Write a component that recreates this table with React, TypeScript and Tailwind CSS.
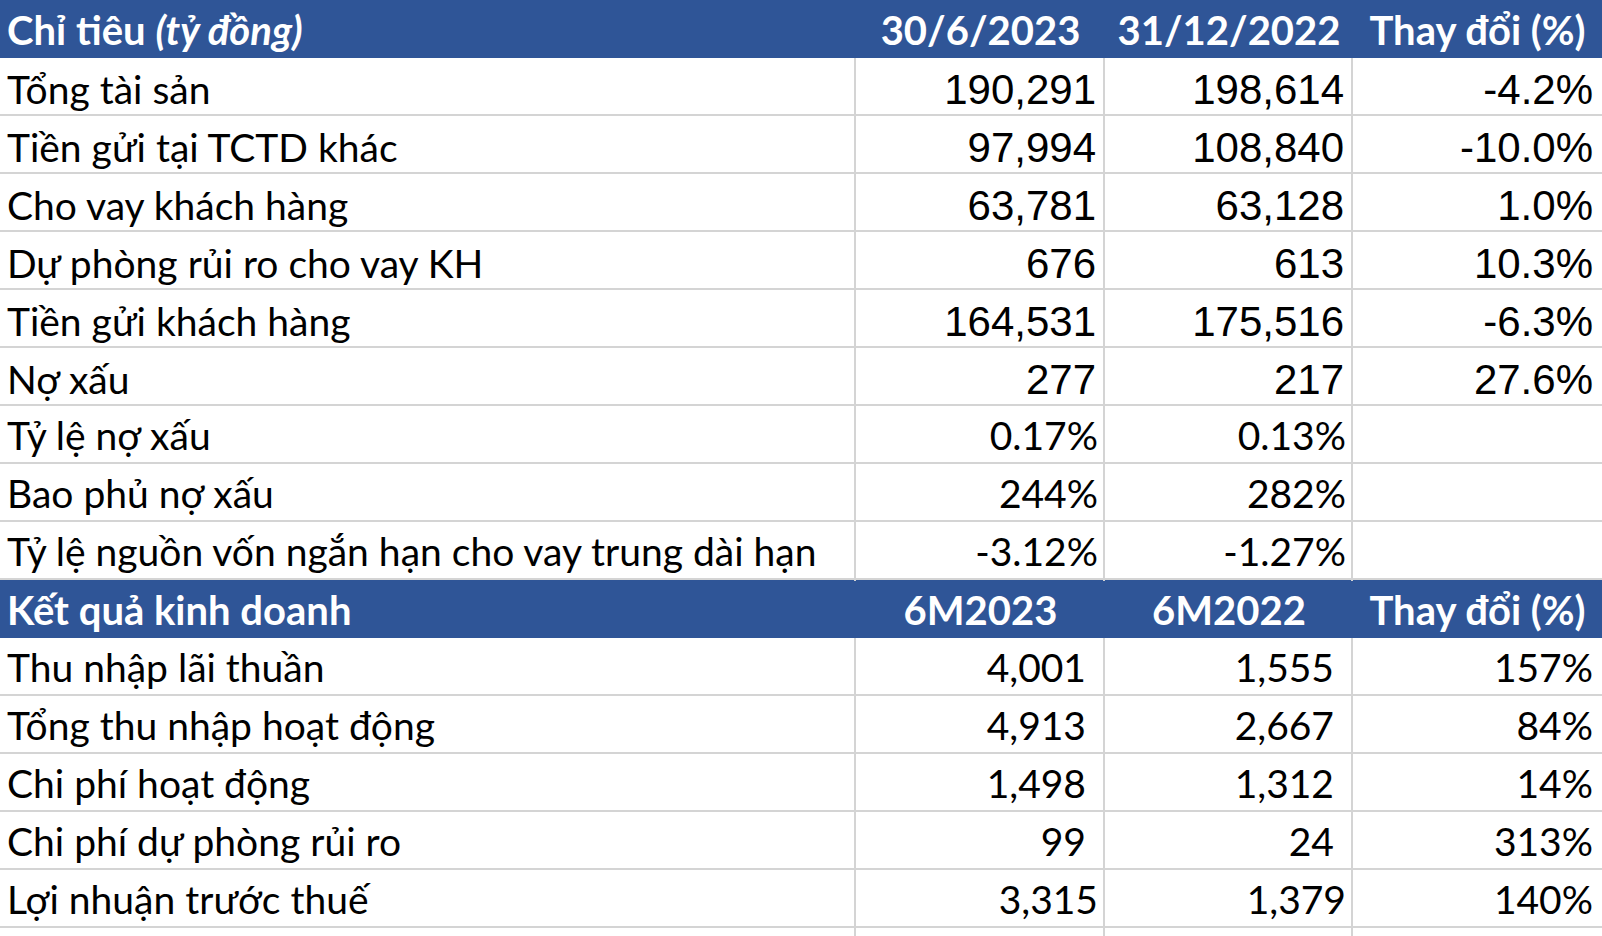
import React from 'react'

type Cell = { v: string; f?: 'a' | 'c'; pr?: string }
type Row = { label: string; cells: Cell[] }

const calibri = "font-['Lato','Noto_Sans',sans-serif] text-[39px]"
const calibriHead = "font-['Lato','Noto_Sans',sans-serif] text-[40px]"
const arial = "font-['Liberation_Sans',Arial,sans-serif] text-[42px]"

const a = (v: string, pr = 'pr-[7px]'): Cell => ({ v, f: 'a', pr })
const c = (v: string, pr = 'pr-[5px]'): Cell => ({ v, f: 'c', pr })

const balance: Row[] = [
  { label: 'Tổng tài sản', cells: [a('190,291'), a('198,614'), a('-4.2%', 'pr-[9px]')] },
  { label: 'Tiền gửi tại TCTD khác', cells: [a('97,994'), a('108,840'), a('-10.0%', 'pr-[9px]')] },
  { label: 'Cho vay khách hàng', cells: [a('63,781'), a('63,128'), a('1.0%', 'pr-[9px]')] },
  { label: 'Dự phòng rủi ro cho vay KH', cells: [a('676'), a('613'), a('10.3%', 'pr-[9px]')] },
  { label: 'Tiền gửi khách hàng', cells: [a('164,531'), a('175,516'), a('-6.3%', 'pr-[9px]')] },
  { label: 'Nợ xấu', cells: [a('277'), a('217'), a('27.6%', 'pr-[9px]')] },
  { label: 'Tỷ lệ nợ xấu', cells: [c('0.17%'), c('0.13%'), c('')] },
  { label: 'Bao phủ nợ xấu', cells: [c('244%'), c('282%'), c('')] },
  { label: 'Tỷ lệ nguồn vốn ngắn hạn cho vay trung dài hạn', cells: [c('-3.12%'), c('-1.27%'), c('')] },
]

const income: Row[] = [
  { label: 'Thu nhập lãi thuần', cells: [c('4,001', 'pr-[17px]'), c('1,555', 'pr-[17px]'), c('157%', 'pr-[9px]')] },
  { label: 'Tổng thu nhập hoạt động', cells: [c('4,913', 'pr-[17px]'), c('2,667', 'pr-[17px]'), c('84%', 'pr-[9px]')] },
  { label: 'Chi phí hoạt động', cells: [c('1,498', 'pr-[17px]'), c('1,312', 'pr-[17px]'), c('14%', 'pr-[9px]')] },
  { label: 'Chi phí dự phòng rủi ro', cells: [c('99', 'pr-[17px]'), c('24', 'pr-[17px]'), c('313%', 'pr-[9px]')] },
  { label: 'Lợi nhuận trước thuế', cells: [c('3,315'), c('1,379'), c('140%', 'pr-[9px]')] },
]

function HeaderRow({ title, cols }: { title: React.ReactNode; cols: string[] }) {
  return (
    <div className={`grid grid-cols-[856px_249px_248px_249px] h-[58px] bg-[#2f5597] text-white font-bold ${calibriHead}`}>
      <div className="flex items-center pl-[7px] whitespace-nowrap">{title}</div>
      {cols.map((t) => (
        <div key={t} className="flex items-center justify-center whitespace-nowrap">{t}</div>
      ))}
    </div>
  )
}

function BodyRow({ row }: { row: Row }) {
  return (
    <div className="grid grid-cols-[856px_249px_248px_249px] h-[58px] border-b-2 border-[#d4d4d4] text-black">
      <div className={`flex items-center pl-[7px] whitespace-nowrap border-r-2 border-[#d4d4d4] ${calibri}`}>{row.label}</div>
      {row.cells.map((cell, i) => (
        <div
          key={i}
          className={`flex items-center justify-end whitespace-nowrap ${cell.pr} ${i < 2 ? 'border-r-2 border-[#d4d4d4]' : ''} ${cell.f === 'a' ? arial : calibri}`}
        >
          {cell.v}
        </div>
      ))}
    </div>
  )
}

export default function App() {
  return (
    <div className="w-[1602px] h-[936px] bg-white overflow-hidden">
      <HeaderRow
        title={<>Chỉ tiêu <i className="ml-[10px]">(tỷ đồng)</i></>}
        cols={['30/6/2023', '31/12/2022', 'Thay đổi (%)']}
      />
      {balance.map((r) => <BodyRow key={r.label} row={r} />)}
      <HeaderRow title="Kết quả kinh doanh" cols={['6M2023', '6M2022', 'Thay đổi (%)']} />
      {income.map((r) => <BodyRow key={r.label} row={r} />)}
      <div className="grid grid-cols-[856px_249px_248px_249px] h-[8px]">
        <div className="border-r-2 border-[#d4d4d4]" />
        <div className="border-r-2 border-[#d4d4d4]" />
        <div className="border-r-2 border-[#d4d4d4]" />
        <div />
      </div>
    </div>
  )
}
